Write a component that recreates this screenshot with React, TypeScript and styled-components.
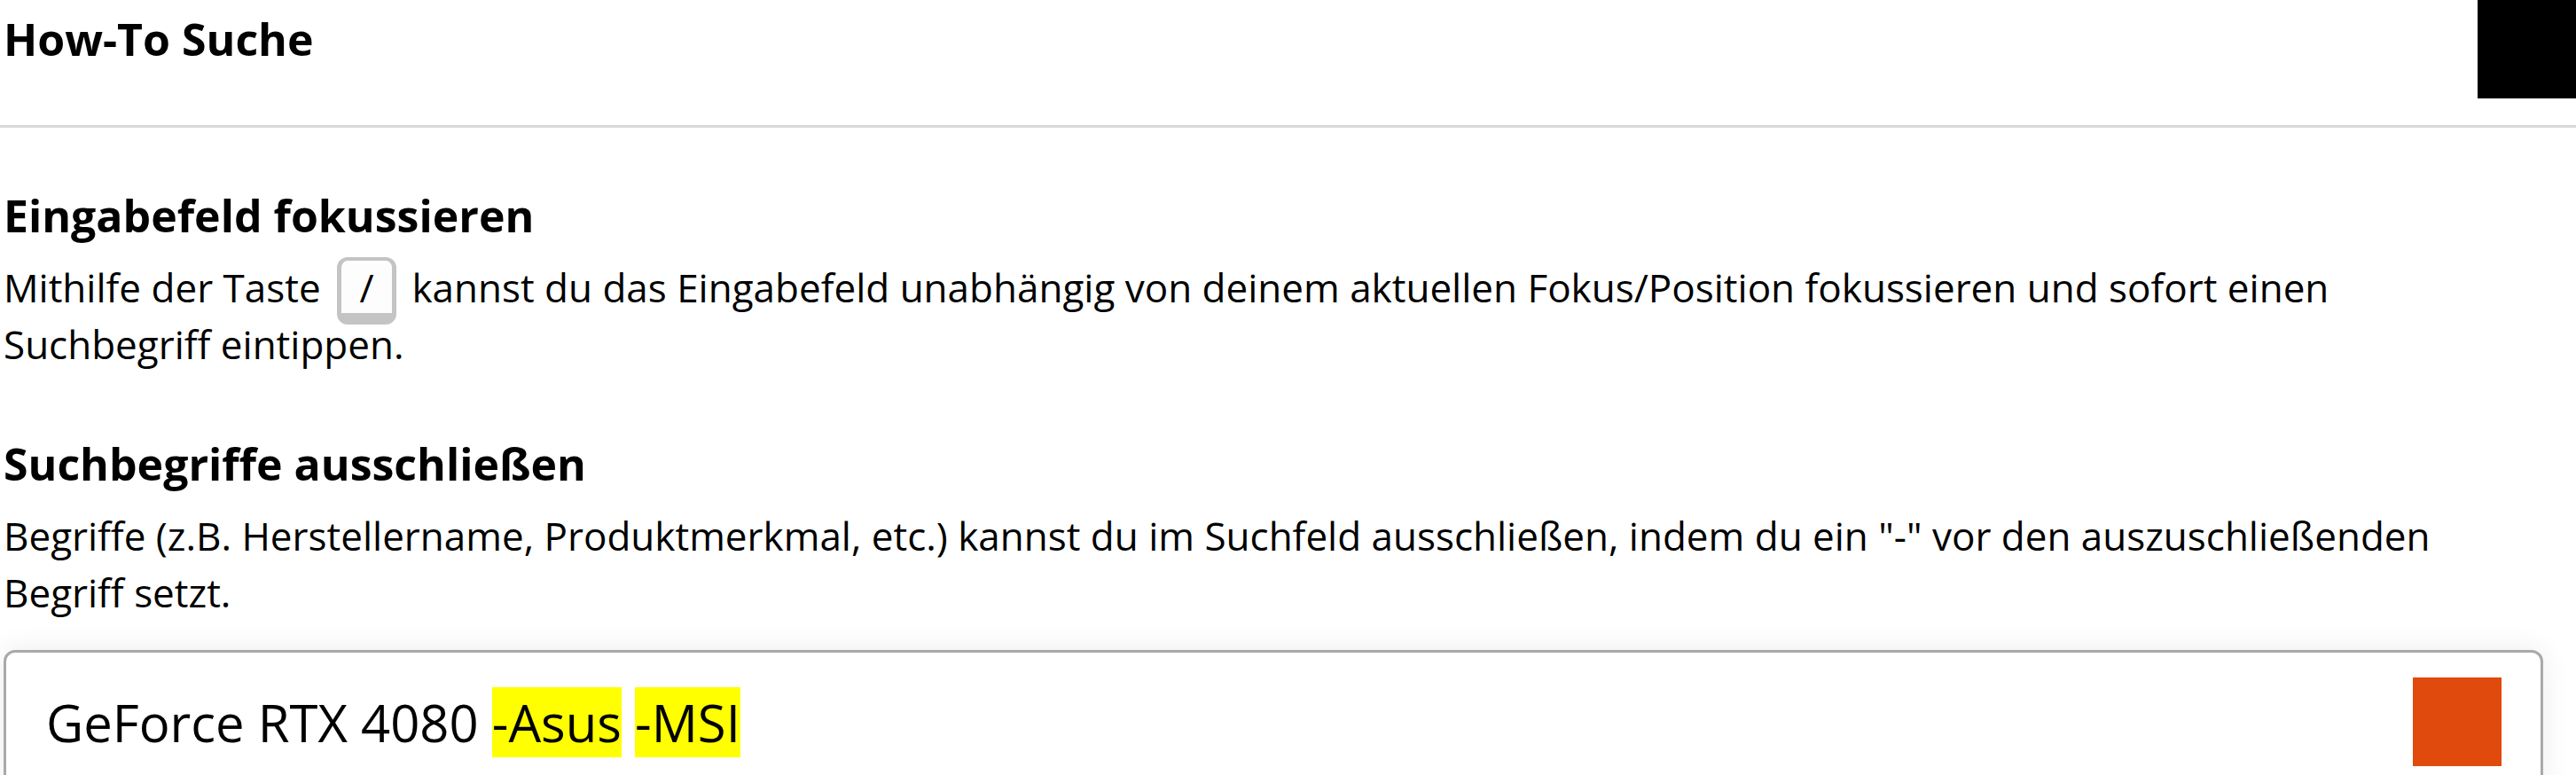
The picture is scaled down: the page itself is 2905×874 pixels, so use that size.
import React from "react";
import styled, { createGlobalStyle } from "styled-components";

const GlobalStyle = createGlobalStyle`
  html, body {
    margin: 0;
    padding: 0;
    background: #fff;
  }
  body {
    font-family: "Open Sans", "Noto Sans", sans-serif;
    color: #000;
    overflow: hidden;
  }
`;

const Page = styled.div`
  width: 100%;
  min-height: 100vh;
`;

const Header = styled.header`
  display: flex;
  justify-content: space-between;
  align-items: flex-start;
  height: 141px;
  padding-left: 4px;
  border-bottom: 3px solid #d9d9d9;
`;

const Title = styled.h1`
  margin: 0;
  padding-top: 14px;
  font-size: 50px;
  line-height: 60px;
  font-weight: 700;
`;

const CloseButton = styled.button`
  width: 111px;
  height: 111px;
  border: none;
  padding: 0;
  background: #000;
`;

const Content = styled.main`
  display: flex;
  flex-direction: column;
  gap: 73px;
  padding: 69px 37px 0 4px;
`;

const Section = styled.section`
  display: flex;
  flex-direction: column;
`;

const Heading = styled.h2`
  margin: 0 0 19px;
  font-size: 50px;
  line-height: 60px;
  font-weight: 700;
`;

const Text = styled.p`
  margin: 0;
  font-size: 44px;
  line-height: 64px;
`;

// keyboard key: white face, thick grey bottom edge
const Key = styled.kbd`
  display: inline-block;
  width: 57px;
  padding: 8px 0 7px;
  margin: -4px 6px -10px 7px;
  font-family: inherit;
  font-size: 44px;
  line-height: 44px;
  text-align: center;
  background: #fdfdfd;
  border: 5px solid #c4c4c4;
  border-top-width: 4px;
  border-bottom-width: 13px;
  border-radius: 12px;
`;

const SearchBox = styled.div`
  display: flex;
  align-items: center;
  justify-content: space-between;
  margin-top: 33px;
  padding: 28px 44px 28px 45px;
  background: #fff;
  border: 3px solid #a9a9a9;
  border-radius: 13px;
  box-shadow: 0 0 32px rgba(0, 0, 0, 0.08);
`;

const SearchText = styled.div`
  font-family: "Open Sans", sans-serif;
  font-size: 58px;
  line-height: normal;
  white-space: pre;
`;

const Excluded = styled.mark`
  background: #ffff00;
  color: inherit;
`;

const SearchButton = styled.button`
  width: 100px;
  height: 100px;
  flex: none;
  border: none;
  padding: 0;
  background: #e04a0d;
`;

export default function App() {
  return (
    <Page>
      <GlobalStyle />
      <Header>
        <Title>How-To Suche</Title>
        <CloseButton aria-label="Schließen" />
      </Header>
      <Content>
        <Section>
          <Heading>Eingabefeld fokussieren</Heading>
          <Text>
            Mithilfe der Taste <Key>/</Key> kannst du das Eingabefeld unabhängig von
            deinem aktuellen Fokus/Position fokussieren und sofort einen Suchbegriff
            eintippen.
          </Text>
        </Section>
        <Section>
          <Heading>Suchbegriffe ausschließen</Heading>
          <Text>
            Begriffe (z.B. Herstellername, Produktmerkmal, etc.) kannst du im Suchfeld
            ausschließen, indem du ein "-" vor den auszuschließenden Begriff setzt.
          </Text>
          <SearchBox>
            <SearchText>
              GeForce RTX 4080 <Excluded>-Asus</Excluded> <Excluded>-MSI</Excluded>
            </SearchText>
            <SearchButton aria-label="Suchen" />
          </SearchBox>
        </Section>
      </Content>
    </Page>
  );
}
